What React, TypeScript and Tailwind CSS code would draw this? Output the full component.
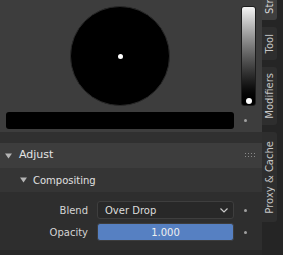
import React from "react";

function Tri() {
  return (
    <svg width="7" height="6" viewBox="0 0 7 6" className="shrink-0">
      <polygon points="0,0.5 7,0.5 3.5,5.5" fill="#b4b4b4" />
    </svg>
  );
}

function Dot() {
  return <div className="w-[3px] h-[3px] rounded-full bg-[#a0a0a0] shrink-0" />;
}

function Tab({ label, active, h, mt = 0, cut = false }: { label: string; active?: boolean; h: number; mt?: number; cut?: boolean }) {
  return (
    <div
      className={`w-[15px] rounded-r-[3px] flex shrink-0 ${active ? "bg-[#3f3f3f]" : "bg-[#2e2e2e]"} ${cut ? "items-end justify-center pb-[6px]" : "items-center justify-center"}`}
      style={{ height: h, marginTop: mt }}
    >
      <span
        className={`[writing-mode:vertical-rl] rotate-180 text-[10px] leading-[15px] whitespace-nowrap ${active ? "text-[#d8d8d8]" : "text-[#c6c6c6]"}`}
      >
        {label}
      </span>
    </div>
  );
}

export default function App() {
  return (
    <div
      className="w-[283px] h-[255px] flex overflow-hidden bg-[#282828]"
      style={{ fontFamily: '"DejaVu Sans", sans-serif' }}
    >
      <div className="w-[262px] flex flex-col shrink-0">
        <div className="h-[132px] bg-[#3d3d3d] pt-[6px] flex flex-col shrink-0">
          <div className="flex h-[100px]">
            <div className="ml-[70px] w-[100px] h-[100px] rounded-full bg-black border border-[#2a2a2a] flex items-center justify-center">
              <div className="w-[5px] h-[5px] rounded-full bg-white" />
            </div>
            <div className="ml-[71px] w-[15px] h-[100px] rounded-[3px] border border-[#1c1c1c] bg-linear-to-b from-[#f4f4f4] to-black flex flex-col justify-end items-center pb-[1px]">
              <div className="w-[6px] h-[6px] rounded-full bg-white" />
            </div>
          </div>
          <div className="mt-[6px] flex items-center h-[17px]">
            <div className="ml-[6px] w-[228px] h-[17px] bg-black rounded-[3px]" />
            <div className="ml-[10px]">
              <Dot />
            </div>
          </div>
        </div>
        <div className="h-[11px] bg-[#303030] shrink-0" />
        <div className="h-[25px] bg-[#3d3d3d] flex items-center pl-[5px] shrink-0">
          <Tri />
          <span className="ml-[7px] text-[11px] text-[#e4e4e4]">Adjust</span>
          <svg width="10" height="5" viewBox="0 0 10 5" className="ml-auto mr-[7px]">
            {[0, 3, 6, 9].map((x) => (
              <React.Fragment key={x}>
                <rect x={x} y={0} width={1} height={1} fill="#8a8a8a" />
                <rect x={x} y={3} width={1} height={1} fill="#8a8a8a" />
              </React.Fragment>
            ))}
          </svg>
        </div>
        <div className="h-[24px] bg-[#353535] flex items-center pl-[20px] shrink-0">
          <Tri />
          <span className="ml-[6px] text-[10px] text-[#e0e0e0]">Compositing</span>
        </div>
        <div className="h-[58px] bg-[#2e2e2e] pt-[9px] flex flex-col gap-[4px] shrink-0">
          <div className="flex items-center h-[18px]">
            <div className="w-[88px] text-right text-[10px] text-[#d4d4d4]">Blend</div>
            <div className="ml-[9px] w-[137px] h-[18px] rounded-[3px] bg-[#282828] border border-[#3e3e3e] flex items-center pl-[7px] pr-[5px]">
              <span className="text-[10px] text-[#dcdcdc]">Over Drop</span>
              <svg width="8" height="5" viewBox="0 0 8 5" className="ml-auto">
                <polyline points="0.5,0.5 4,4 7.5,0.5" fill="none" stroke="#c8c8c8" strokeWidth="1.2" />
              </svg>
            </div>
            <div className="ml-[10px]">
              <Dot />
            </div>
          </div>
          <div className="flex items-center h-[18px]">
            <div className="w-[88px] text-right text-[10px] text-[#d4d4d4]">Opacity</div>
            <div className="ml-[9px] w-[137px] h-[18px] rounded-[3px] bg-[#5680c2] border border-[#3d3d3d] flex items-center justify-center">
              <span className="text-[10px] text-[#f0f0f0]">1.000</span>
            </div>
            <div className="ml-[10px]">
              <Dot />
            </div>
          </div>
        </div>
        <div className="flex-1 bg-[#282828]" />
      </div>
      <div className="w-[21px] bg-[#252525] flex flex-col gap-[7px] shrink-0">
        <Tab label="Stroke" active h={44} mt={-24} cut />
        <Tab label="Tool" h={33} />
        <Tab label="Modifiers" h={58} />
        <Tab label="Proxy & Cache" h={90} />
      </div>
    </div>
  );
}
